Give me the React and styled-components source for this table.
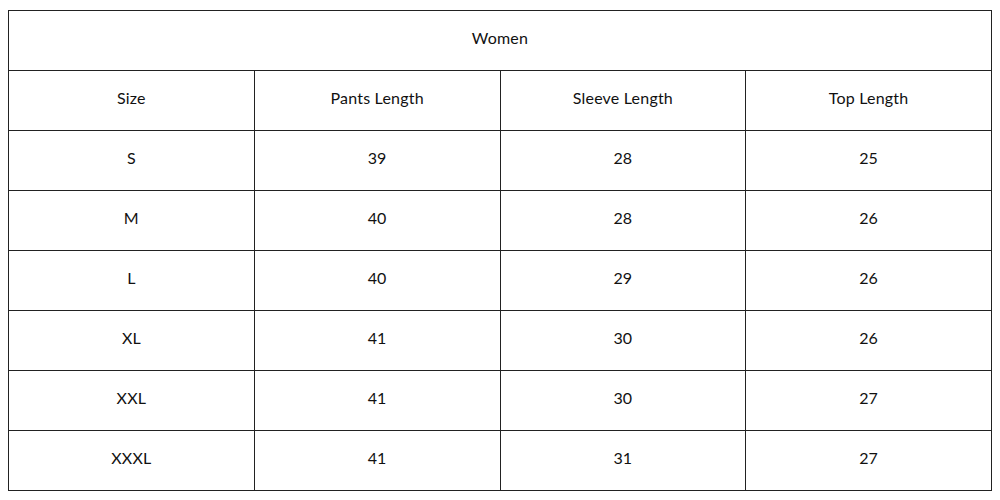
import styled, { createGlobalStyle } from "styled-components"

const GlobalStyle = createGlobalStyle`
  body {
    margin: 0;
    background: #fff;
    font-family: "Lato", "Noto Sans", sans-serif;
  }
`

const Wrapper = styled.div`
  padding: 10px 8px 0 8px;
`

const Table = styled.table`
  width: 984px;
  border-collapse: collapse;
  border: 1px solid #555;
  color: #111;
  font-size: 16px;
  table-layout: fixed;
`

const Cell = styled.td`
  height: 60px;
  box-sizing: border-box;
  padding: 0 0 6px 0;
  border: 1px solid #222;
  text-align: center;
  vertical-align: middle;
  letter-spacing: 0.2px;
`

const rows = [
  ["S", 39, 28, 25],
  ["M", 40, 28, 26],
  ["L", 40, 29, 26],
  ["XL", 41, 30, 26],
  ["XXL", 41, 30, 27],
  ["XXXL", 41, 31, 27],
]

const headers = ["Size", "Pants Length", "Sleeve Length", "Top Length"]

const App = () => {
  return (
    <Wrapper>
      <GlobalStyle />
      <Table>
        <tbody>
          <tr>
            <Cell colSpan={4}>Women</Cell>
          </tr>
          <tr>
            {headers.map((h) => (
              <Cell key={h}>{h}</Cell>
            ))}
          </tr>
          {rows.map((r) => (
            <tr key={r[0]}>
              {r.map((v, i) => (
                <Cell key={i}>{v}</Cell>
              ))}
            </tr>
          ))}
        </tbody>
      </Table>
    </Wrapper>
  )
}

export default App
